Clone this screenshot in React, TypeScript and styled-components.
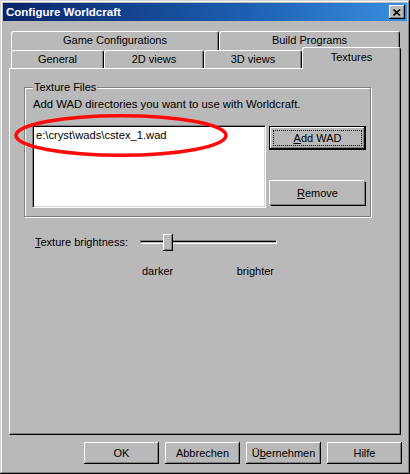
import React from 'react';
import styled, { createGlobalStyle } from 'styled-components';

const FACE = '#b9b9b9';

const GlobalStyle = createGlobalStyle`
  html, body {
    margin: 0;
    padding: 0;
    background: ${FACE};
  }
  body {
    font-family: "Liberation Sans", Arial, sans-serif;
    font-size: 11px;
    color: #000;
  }
`;

const raised = `
  box-shadow: inset -1px -1px 0 #000, inset 1px 1px 0 #fff, inset -2px -2px 0 #808080;
`;

const Window = styled.div`
  position: relative;
  box-sizing: border-box;
  width: 410px;
  height: 474px;
  padding: 3px;
  background: ${FACE};
  box-shadow: inset -1px -1px 0 #000, inset 1px 1px 0 #d4d4d4, inset -2px -2px 0 #808080,
    inset 2px 2px 0 #fff;
  display: flex;
  flex-direction: column;
`;

const TitleBar = styled.div`
  height: 18px;
  padding: 0 2px 0 3px;
  background: linear-gradient(to right, #0a246a 0%, #1c5fb0 60%, #3a8ee0 100%);
  display: flex;
  align-items: center;
  justify-content: space-between;
`;

const Title = styled.span`
  color: #fff;
  font-weight: bold;
  font-size: 11.5px;
  line-height: 18px;
`;

const CloseButton = styled.div`
  box-sizing: border-box;
  width: 16px;
  height: 14px;
  background: ${FACE};
  ${raised}
  display: flex;
  align-items: center;
  justify-content: center;
`;

const TabArea = styled.div`
  margin: 10px 0 0 8px;
  display: flex;
  flex-direction: column;
`;

const TabRow = styled.div<{ $h: number }>`
  display: flex;
  height: ${(p) => p.$h}px;
`;

const Tab = styled.div<{ $w: number; $active?: boolean }>`
  position: relative;
  box-sizing: border-box;
  width: ${(p) => p.$w}px;
  height: ${(p) => (p.$active ? '22px' : '100%')};
  margin-top: ${(p) => (p.$active ? '-3px' : '0')};
  z-index: ${(p) => (p.$active ? 1 : 0)};
  border-top: 1px solid #fff;
  border-left: 1px solid #fff;
  border-right: 1px solid #000;
  border-radius: 3px 3px 0 0;
  box-shadow: inset -1px 0 0 #808080;
  background: ${FACE};
  display: flex;
  justify-content: center;
  padding-top: ${(p) => (p.$active ? '2px' : '1px')};
  line-height: 14px;
`;

const Panel = styled.div`
  box-sizing: border-box;
  margin-left: 6px;
  width: 392px;
  height: 367px;
  border-top: 1px solid #fff;
  border-left: 1px solid #fff;
  border-right: 1px solid #000;
  border-bottom: 1px solid #000;
  box-shadow: inset -1px -1px 0 #808080;
  display: flex;
  flex-direction: column;
`;

const Group = styled.div`
  box-sizing: border-box;
  margin: 18px 0 0 14px;
  width: 347px;
  height: 130px;
  border: 1px solid #808080;
  box-shadow: inset 1px 1px 0 #fff, 1px 1px 0 #fff;
  display: flex;
  flex-direction: column;
`;

const GroupTitle = styled.span`
  align-self: flex-start;
  margin: -7px 0 0 8px;
  padding: 0 1px;
  background: ${FACE};
  line-height: 13px;
`;

const Hint = styled.div`
  margin: 4px 0 0 8px;
  font-size: 11.3px;
  line-height: 13px;
`;

const FileRow = styled.div`
  display: flex;
  gap: 3px;
  margin: 14px 0 0 7px;
`;

const ListBox = styled.div`
  box-sizing: border-box;
  width: 234px;
  height: 83px;
  background: #fff;
  border-top: 1px solid #808080;
  border-left: 1px solid #808080;
  border-right: 1px solid #fff;
  border-bottom: 1px solid #fff;
  box-shadow: inset 1px 1px 0 #000, inset -1px -1px 0 #d4d4d4;
  padding: 3px 0 0 3px;
`;

const ListItem = styled.div`
  font-size: 11.2px;
  line-height: 13px;
`;

const ButtonColumn = styled.div`
  display: flex;
  flex-direction: column;
  gap: 30px;
  padding-top: 1px;
`;

const Button = styled.div<{ $w: number; $h: number; $default?: boolean }>`
  box-sizing: border-box;
  width: ${(p) => p.$w}px;
  height: ${(p) => p.$h}px;
  background: ${FACE};
  border: 1px solid ${(p) => (p.$default ? '#000' : 'transparent')};
  ${(p) =>
    p.$default
      ? 'box-shadow: inset -1px -1px 0 #000, inset 1px 1px 0 #fff, inset -2px -2px 0 #808080;'
      : 'box-shadow: -1px -1px 0 #fff, 1px 1px 0 #000, inset -1px -1px 0 #808080; border: none; margin: 1px 0 0 1px; width: calc(100% - 2px);'}
  display: flex;
  align-items: center;
  justify-content: center;
  padding: 3px;
  font-size: 11px;
`;

const FocusRing = styled.span`
  box-sizing: border-box;
  width: 100%;
  height: 100%;
  border: 1px dotted #000;
  display: flex;
  align-items: center;
  justify-content: center;
`;

const BrightnessRow = styled.div`
  display: flex;
  align-items: center;
  height: 17px;
  margin: 17px 0 0 25px;
`;

const SliderLabel = styled.span`
  width: 105px;
  line-height: 13px;
`;

const Slider = styled.div`
  position: relative;
  width: 137px;
  height: 17px;
  display: flex;
  align-items: center;
`;

const Track = styled.div`
  box-sizing: border-box;
  width: 100%;
  height: 4px;
  border-top: 1px solid #808080;
  border-left: 1px solid #808080;
  border-bottom: 1px solid #fff;
  border-right: 1px solid #fff;
  box-shadow: inset 0 1px 0 #000;
  margin-top: -1px;
`;

const Thumb = styled.div`
  position: absolute;
  top: 0;
  box-sizing: border-box;
  width: 10px;
  height: 17px;
  background: ${FACE};
  ${raised}
`;

const ScaleLabels = styled.div`
  display: flex;
  justify-content: space-between;
  width: 137px;
  box-sizing: border-box;
  padding: 0 3px 0 2px;
  margin: 14px 0 0 130px;
  line-height: 13px;
`;

const ButtonBar = styled.div`
  display: flex;
  justify-content: flex-end;
  gap: 6px;
  margin: 7px 5px 0 0;
`;

const DialogButton = styled.div`
  box-sizing: border-box;
  width: 75px;
  height: 22px;
  background: ${FACE};
  ${raised}
  display: flex;
  align-items: center;
  justify-content: center;
  padding-bottom: 1px;
`;

const Annotation = styled.svg`
  position: absolute;
  left: 10px;
  top: 110px;
  pointer-events: none;
`;

const thumbValue = 23;

const App = () => (
  <>
    <GlobalStyle />
    <Window>
      <TitleBar>
        <Title>Configure Worldcraft</Title>
        <CloseButton>
          <svg width="8" height="7" viewBox="0 0 8 7">
            <path d="M0.5 0.5 L7 6.5 M7 0.5 L0.5 6.5" stroke="#000" strokeWidth="1.6" />
          </svg>
        </CloseButton>
      </TitleBar>

      <TabArea>
        <TabRow $h={19}>
          <Tab $w={208}>Game Configurations</Tab>
          <Tab $w={181}>Build Programs</Tab>
        </TabRow>
        <TabRow $h={18}>
          <Tab $w={93}>General</Tab>
          <Tab $w={100}>2D views</Tab>
          <Tab $w={98}>3D views</Tab>
          <Tab $w={99} $active>
            Textures
          </Tab>
        </TabRow>
      </TabArea>

      <Panel>
        <Group>
          <GroupTitle>Texture Files</GroupTitle>
          <Hint>Add WAD directories you want to use with Worldcraft.</Hint>
          <FileRow>
            <ListBox>
              <ListItem>e:\cryst\wads\cstex_1.wad</ListItem>
            </ListBox>
            <ButtonColumn>
              <Button $w={97} $h={24} $default>
                <FocusRing>
                  <span>
                    <u>A</u>dd WAD
                  </span>
                </FocusRing>
              </Button>
              <Button $w={97} $h={24}>
                <span>
                  <u>R</u>emove
                </span>
              </Button>
            </ButtonColumn>
          </FileRow>
        </Group>

        <BrightnessRow>
          <SliderLabel>
            <u>T</u>exture brightness:
          </SliderLabel>
          <Slider>
            <Track />
            <Thumb style={{ left: thumbValue }} />
          </Slider>
        </BrightnessRow>
        <ScaleLabels>
          <span>darker</span>
          <span>brighter</span>
        </ScaleLabels>
      </Panel>

      <ButtonBar>
        <DialogButton>OK</DialogButton>
        <DialogButton>Abbrechen</DialogButton>
        <DialogButton>
          <span>
            Ü<u>b</u>ernehmen
          </span>
        </DialogButton>
        <DialogButton>Hilfe</DialogButton>
      </ButtonBar>

      <Annotation width="225" height="52" viewBox="0 0 225 52">
        <ellipse cx="111" cy="25.5" rx="105" ry="19.7" fill="none" stroke="#ff0a0a" strokeWidth="3.5" />
      </Annotation>
    </Window>
  </>
);

export default App;
